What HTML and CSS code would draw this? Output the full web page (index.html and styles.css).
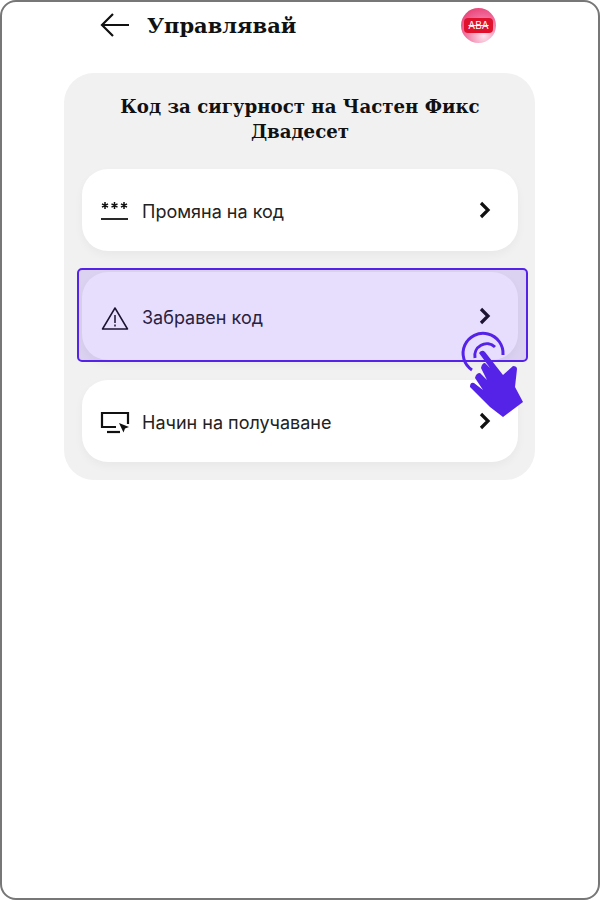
FILE: index.html
```html
<!DOCTYPE html>
<html lang="bg">
<head>
    <meta charset="UTF-8">
    <title>Управлявай</title>
    <link rel="stylesheet" href="styles.css">
</head>
<body>
    <div class="frame">
        <header class="topbar">
            <svg class="back" width="30" height="26" viewBox="0 0 30 26"><path d="M29 13H2M13 2 2 13l11 11" fill="none" stroke="#111" stroke-width="2.2"/></svg>
            <h1 class="page-title">Управлявай</h1>
            <div class="avatar"><span class="avatar-tag">ABA</span></div>
        </header>
        <section class="card">
            <h2 class="card-title">Код за сигурност на Частен Фикс Двадесет</h2>
            <div class="row">
                <svg class="row-icon" width="30" height="22" viewBox="0 0 30 22"><path d="M1 20h27" stroke="#111" stroke-width="1.8"/><path d="M5 3v7M2 4.8l6 3.4M8 4.8 2 8.2M14.500 3v7M11.500 4.800l6 3.400M17.500 4.800l-6 3.400M24 3v7M21 4.800l6 3.400M27 4.800l-6 3.400" stroke="#111" stroke-width="1.500"/></svg>
                <span class="row-label">Промяна на код</span>
                <svg class="chevron" width="14" height="18" viewBox="0 0 14 18"><path d="m3 2 7 7-7 7" fill="none" stroke="#111" stroke-width="3.200"/></svg>
            </div>
            <div class="row row-active">
                <svg class="row-icon row-icon-low" width="30" height="26" viewBox="0 0 30 26"><path d="M15 3 2.500 24h25z" fill="none" stroke="#111" stroke-width="1.500" stroke-linejoin="round"/><path d="M15 10v8M15 19.500v2" stroke="#111" stroke-width="1.500"/></svg>
                <span class="row-label">Забравен код</span>
                <svg class="chevron" width="14" height="18" viewBox="0 0 14 18"><path d="m3 2 7 7-7 7" fill="none" stroke="#111" stroke-width="3.200"/></svg>
                <div class="highlight"></div>
            </div>
            <div class="row">
                <svg class="row-icon row-icon-low" width="30" height="24" viewBox="0 0 30 24"><path d="M16 16H2V2h26v11" fill="none" stroke="#111" stroke-width="2.200"/><path d="M7 21h13" stroke="#111" stroke-width="2.200"/><path d="m19 12 10 4-4 1.500-1.500 4z" fill="#111"/></svg>
                <span class="row-label">Начин на получаване</span>
                <svg class="chevron" width="14" height="18" viewBox="0 0 14 18"><path d="m3 2 7 7-7 7" fill="none" stroke="#111" stroke-width="3.200"/></svg>
            </div>
        </section>
        <svg class="hand" width="66" height="90" viewBox="0 0 66 90">
            <path d="M12 40A20 20 0 1 1 43 25" fill="none" stroke="#5522e8" stroke-width="3"/>
            <path d="M15 28A12 12 0 0 1 35 17" fill="none" stroke="#5522e8" stroke-width="3"/>
            <path d="M19 23Q22 19 25 22L43 45 53 36Q57 36 57 39L55 57 63 72 43 87 30 77 10 57Q10 52 14 53L23 60 15 48Q16 43 20 43L27 50 21 38Q22 33 25 33L30 38z" fill="#5522e8"/>
        </svg>
    </div>
</body>
</html>
```

FILE: styles.css
```css
html, body {
    margin: 0;
    height: 100%;
}
body {
    font-family: 'Inter', sans-serif;
    background-color: white;
    color: #111;
}
.frame {
    position: relative;
    box-sizing: border-box;
    width: 600px;
    height: 900px;
    border: 2px solid #777;
    border-radius: 16px;
    padding: 0 62px;
}
.topbar {
    display: flex;
    align-items: center;
    height: 46px;
    padding-left: 36px;
}
.back {
    margin-right: 17px;
}
.page-title {
    margin: 0;
    font-family: 'DejaVu Serif', serif;
    font-size: 21px;
    font-weight: 700;
    flex: 1;
}
.avatar {
    display: flex;
    align-items: center;
    justify-content: center;
    width: 35px;
    height: 35px;
    margin-right: 40px;
    border-radius: 50%;
    background: radial-gradient(circle at 65% 80%, #fde4ee, #f06a9a 55%, #e8386f 90%);
}
.avatar-tag {
    padding: 2px 4px;
    border-radius: 4px;
    background-color: #e0112d;
    color: white;
    font-size: 10px;
    line-height: 11px;
    text-decoration: line-through;
    text-decoration-thickness: 1px;
}
.card {
    box-sizing: border-box;
    width: 471px;
    height: 407px;
    margin-top: 25px;
    padding: 21px 17px 18px 18px;
    border-radius: 30px;
    background-color: #f1f1f1;
}
.card-title {
    margin: 0 0 25px;
    font-family: 'DejaVu Serif', serif;
    font-size: 18.2px;
    line-height: 25px;
    font-weight: 700;
    text-align: center;
}
.row {
    position: relative;
    display: flex;
    align-items: center;
    height: 82px;
    margin-bottom: 21px;
    padding: 0 26px 0 18px;
    border-radius: 26px;
    background-color: white;
    box-shadow: 0 4px 10px rgba(0, 0, 0, 0.04);
}
.row-icon {
    margin-right: 12px;
}
.row-icon-low {
    margin-top: 3px;
}
.row-label {
    flex: 1;
    margin-top: 3px;
    font-size: 18px;
    color: #222;
}
.row-active {
    height: 88px;
    margin-bottom: 20px;
}
.highlight {
    position: absolute;
    left: -5px;
    right: -10px;
    top: -4px;
    bottom: -2px;
    border: 2px solid #5522e8;
    border-radius: 5px;
    background-color: rgba(85, 34, 232, 0.15);
}
.hand {
    position: absolute;
    left: 458px;
    top: 328px;
}
```
